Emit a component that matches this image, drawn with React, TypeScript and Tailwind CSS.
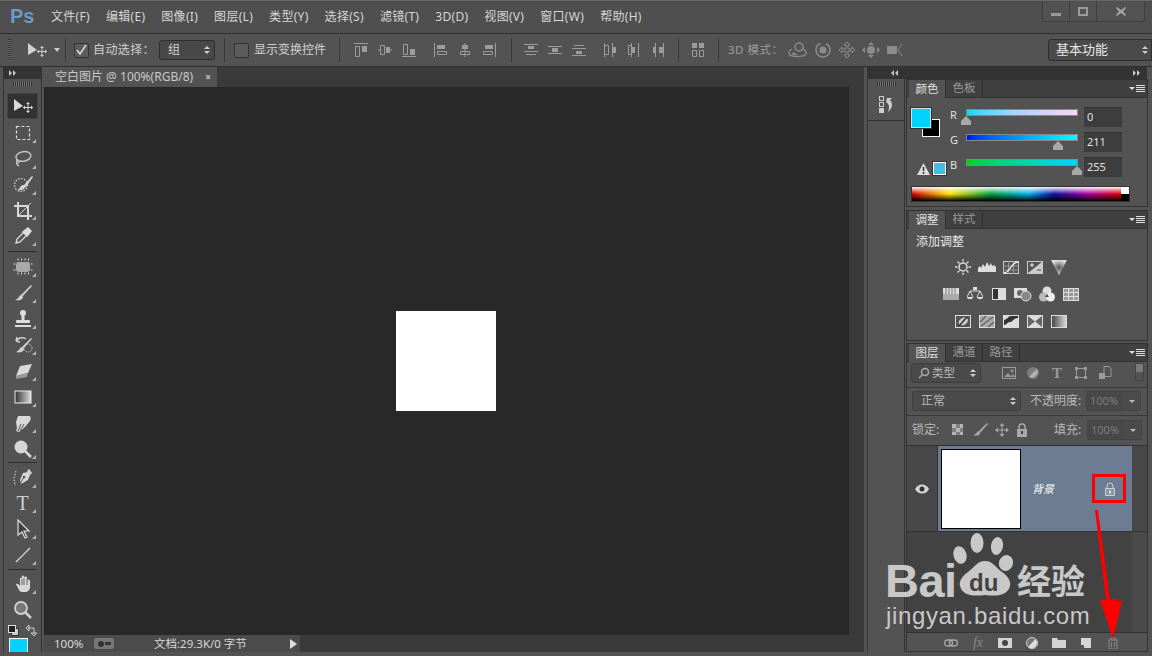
import React from "react";

const G = "#c4c4c4";
const font = "font-['Noto_Sans','Noto_Sans_CJK_SC',sans-serif]";

function S({ w = 20, h = 20, children }: { w?: number; h?: number; children: React.ReactNode }) {
  return (
    <svg width={w} height={h} viewBox={`0 0 ${w} ${h}`} className="block shrink-0">
      {children}
    </svg>
  );
}

const MoveGlyph = ({ c = G }: { c?: string }) => (
  <S w={22} h={16}>
    <path d="M2 1 L2 13 L11 8 Z" fill={c} />
    <path d="M16 5v9M11.5 9.5h9" stroke={c} strokeWidth="1" />
    <path d="M16 4l-2 2h4zM16 15l-2-2h4zM11 9.5l2-2v4zM21 9.5l-2-2v4z" fill={c} />
  </S>
);

const toolIcons: Record<string, React.ReactNode> = {
  move: <MoveGlyph c="#d8d8d8" />,
  marquee: <S><rect x="3.5" y="3.5" width="13" height="13" fill="none" stroke="#ddd" strokeWidth="1.2" strokeDasharray="3 2" /></S>,
  lasso: <S><ellipse cx="10.5" cy="7.5" rx="7.5" ry="4.8" fill="none" stroke={G} strokeWidth="1.5" transform="rotate(-10 10 8)" /><path d="M4 11c-1 3 0 5 2 6" fill="none" stroke={G} strokeWidth="1.4" /><circle cx="5" cy="13" r="1.3" fill="none" stroke={G} /></S>,
  quick: <S><circle cx="8" cy="10" r="6.5" fill="none" stroke="#ddd" strokeDasharray="1.5 1.5" strokeWidth="1.2" /><path d="M19 1l-8 9-1 0-1 3 4-1 7-10z" fill="#d4d4d4" /><path d="M10 10c-2 0-3 3-5 5 4 1 7-1 7-3z" fill="#d4d4d4" /></S>,
  crop: <S><path d="M5 1v14h14M1 5h14v14" fill="none" stroke="#d8d8d8" strokeWidth="2" /><path d="M4 16L18 2" stroke="#d8d8d8" strokeWidth="1" /></S>,
  dropper: <S><path d="M3 17l1-4 7-7 3 3-7 7z" fill="none" stroke="#ddd" strokeWidth="1.3" /><path d="M10 5l5-4 4 4-4 5-1 1-5-5z" fill="#ddd" /></S>,
  heal: <S><path d="M5 1.5v17M8.5 1.5v17M12 1.5v17M15.5 1.5v17M.5 7h19M.5 13h19" stroke="#ddd" strokeDasharray="2 1.5" strokeWidth="1" /><rect x="3" y="5" width="14" height="10" rx="3" fill="#a8a8a8" /></S>,
  brush: <S><path d="M18 2L8 12l1 2L19 3z" fill="#d0d0d0" /><path d="M8 12c-2 0-2 4-6 5 3 1 8 0 8-3z" fill="#d0d0d0" /></S>,
  stamp: <S><circle cx="10" cy="4" r="3" fill="#ddd" /><rect x="8.5" y="6" width="3" height="5" fill="#ddd" /><rect x="3" y="11" width="14" height="3" rx="1" fill="#ddd" /><rect x="2" y="16" width="16" height="2" fill="#ddd" /></S>,
  history: <S><path d="M18 3L9 12l1 2 9-10z" fill="#d0d0d0" /><path d="M9 12c-2 0-3 4-6 5 3 1 8 0 8-3z" fill="#d0d0d0" /><path d="M3 6c3-4 8-4 10-2M3 6l1-4M3 6l4 1" fill="none" stroke="#d0d0d0" strokeWidth="1.5" /><circle cx="15" cy="13" r="4" fill="none" stroke="#ddd" strokeDasharray="1.2 1.2" /></S>,
  eraser: <S><path d="M7 5L19 3l-4 9-12 3z" fill="#d8d8d8" /><path d="M3 15l0 3 11-2 1-4z" fill="#999" /></S>,
  gradient: <svg width="18" height="14" viewBox="0 0 18 14" className="block"><defs><linearGradient id="tg"><stop offset="0" stopColor="#333" /><stop offset="1" stopColor="#ddd" /></linearGradient></defs><rect x="1" y="1" width="16" height="12" fill="url(#tg)" stroke="#eee" /></svg>,
  dodge: <S><path d="M5 3h11c2 0 2 3 1 5l-5 6-6 5-3-1 1-3-1-6z" fill="#d8d8d8" /><path d="M8 11l-3 7M11 11l-4 7" stroke="#555" /></S>,
  sponge: <S><circle cx="8" cy="8" r="6.5" fill="#d6d6d6" /><path d="M12 12l6 6" stroke="#d6d6d6" strokeWidth="2.5" /></S>,
  pen: <S><path d="M7 12l3-7 5-1 2 3-2 5-7 4z" fill="#d8d8d8" /><path d="M14 3l2-2 3 4-2 2z" fill="#d8d8d8" /><circle cx="11" cy="9" r="1.3" fill="#555" /><path d="M7 16l4-7" stroke="#555" /><path d="M3 3L1 10l1 8" fill="none" stroke="#ccc" strokeDasharray="1.5 1.5" strokeWidth="1.2" /></S>,
  path: <S><path d="M5 1v15l4-3 3 6 2-1-3-6h5z" fill="#404040" stroke="#ddd" strokeWidth="1.2" /></S>,
  line: <S><path d="M3 17L17 3" stroke="#d0d0d0" strokeWidth="1.5" /></S>,
  hand: <S><path d="M3 10c2-1 3 1 4 2V5c0-2 2-2 2 0V3c0-2 2-2 2 0v1c0-2 3-2 3 0v3c0-2 3-2 3 0v6c0 3-2 5-5 5H9c-2 0-3-2-4-4z" fill="#d8d8d8" /><path d="M9 5v6M11 4v7M14 5v6" stroke="#666" /></S>,
  zoom: <S><circle cx="8" cy="8" r="6" fill="#777" stroke="#d0d0d0" strokeWidth="1.8" /><path d="M12 12l6 6" stroke="#d0d0d0" strokeWidth="2.5" /></S>,
};

function Tool({ k, corner = true, active = false }: { k?: string; corner?: boolean; active?: boolean }) {
  return (
    <div className={`relative h-[26px] w-[31px] mx-auto flex items-center justify-center ${active ? "bg-[#323232] rounded-[2px] border border-[#444]" : ""}`}>
      {k ? toolIcons[k] : <span className="font-['Liberation_Serif',serif] text-[20px] text-[#d0d0d0] leading-none">T</span>}
      {corner && <span className="absolute right-[2px] bottom-[3px] w-0 h-0 border-l-[4px] border-l-transparent border-b-[4px] border-b-[#b4b4b4]" />}
    </div>
  );
}

const ToolSep = () => <div className="h-[1px] bg-[#2f2f2f] mx-[4px] my-[0.5px]" />;

function Grip({ w = 19 }: { w?: number }) {
  return (
    <div className="h-[10px] flex items-center justify-center">
      <div className="h-[4px] bg-[repeating-linear-gradient(90deg,#2e2e2e_0,#2e2e2e_1px,#777_1px,#777_2px)]" style={{ width: w }} />
    </div>
  );
}

function LeftBar() {
  return (
    <div className="w-[44px] shrink-0 flex">
      <div className="w-[4px] bg-[#535353] border-r border-[#333]" />
      <div className="w-[38px] flex flex-col border-r border-[#333] bg-[#535353]">
        <div className="h-[12px] bg-[#333] flex items-center pl-[5px] text-[#bbb]">
          <svg width="8" height="6" viewBox="0 0 8 6" className="block"><path d="M0 0l3 3-3 3zM4 0l3 3-3 3z" fill="#c8c8c8" /></svg>
        </div>
        <Grip />
        <div className="h-[4px]" />
        <Tool k="move" corner={false} active />
        <div className="h-[1px]" />
        <Tool k="marquee" /><Tool k="lasso" /><Tool k="quick" /><Tool k="crop" /><Tool k="dropper" />
        <div className="h-[1px]" /><ToolSep /><div className="h-[2px]" />
        <Tool k="heal" /><Tool k="brush" /><Tool k="stamp" /><Tool k="history" /><Tool k="eraser" /><Tool k="gradient" /><Tool k="dodge" /><Tool k="sponge" />
        <ToolSep /><div className="h-[1px]" />
        <Tool k="pen" /><Tool /><Tool k="path" /><Tool k="line" />
        <ToolSep /><div className="h-[1px]" />
        <Tool k="hand" /><Tool k="zoom" corner={false} />
        <div className="flex items-center justify-between px-[4px] h-[15px]">
          <svg width="11" height="11" viewBox="0 0 11 11" className="block"><rect x="3.5" y="3.5" width="7" height="7" fill="#ccc" stroke="#333" /><rect x=".5" y=".5" width="7" height="7" fill="#222" stroke="#ddd" /></svg>
          <svg width="11" height="11" viewBox="0 0 11 11" className="block"><path d="M2 3h6v6M0 3l3-3v6zM8 11L5 8h6z" fill="none" stroke="#ccc" /></svg>
        </div>
        <div className="w-[19px] h-[14px] ml-[5px] bg-[#00d3ff] border border-white border-b-0" />
      </div>
    </div>
  );
}

const menus = ["文件(F)", "编辑(E)", "图像(I)", "图层(L)", "类型(Y)", "选择(S)", "滤镜(T)", "3D(D)", "视图(V)", "窗口(W)", "帮助(H)"];

function TitleBar() {
  return (
    <div className="h-[33px] shrink-0 flex bg-[#4f4f4f] border-t border-[#666] relative">
      <div className="w-[51px] pl-[10px] pt-[1px] text-[20px] leading-[28px] font-bold text-[#6b9ac9] font-['Liberation_Sans',sans-serif]">Ps</div>
      <div className="flex gap-[16px] items-center h-[32px] text-[12px] tracking-[0.3px] text-[#d6d6d6]">
        {menus.map((m) => <span key={m}>{m}</span>)}
      </div>
      <div className="absolute left-[1042px] top-0 w-[103px] h-[21px] flex rounded-b-[3px] border border-t-0 border-[#3f3f3f] bg-[#525252]">
        <div className="w-[27px] flex items-center justify-center border-r border-[#3f3f3f]"><div className="w-[10px] h-[3px] mt-[6px] bg-[#9a9a9a]" /></div>
        <div className="w-[27px] flex items-center justify-center border-r border-[#3f3f3f]"><div className="w-[10px] h-[9px] border-2 border-[#9a9a9a]" /></div>
        <div className="flex-1 flex items-center justify-center"><svg width="10" height="9" viewBox="0 0 10 9" className="block"><path d="M1 0l4 3 4-3 1 1-3 3.5 3 3.5-1 1-4-3-4 3-1-1 3-3.5-3-3.5z" fill="#a4a4a4" /></svg></div>
      </div>
    </div>
  );
}

function A({ d, filled }: { d: string; filled: string }) {
  return (
    <svg width="16" height="16" viewBox="0 0 16 16" className="block shrink-0">
      <path d={d} fill="none" stroke="#9c9c9c" />
      <path d={filled} fill="#9c9c9c" />
    </svg>
  );
}

const VSep = ({ mx }: { mx: string }) => <div className={`w-[1px] h-[24px] shrink-0 bg-[#383838] ${mx}`} />;

const alignA: [string, string][] = [
  ["M1 1.5h14M2.5 4.5h4v10h-4z", "M9 4h5v6H9z"],
  ["M1 8h2M13 8h2M3.5 3.5h4v9h-4z", "M9 5h4v6H9z"],
  ["M1 14.5h14M2.5 2.5h4v10h-4z", "M9 7h5v6H9z"],
];
const alignB: [string, string][] = [
  ["M1.5 1v14M4.5 9.5h9v3h-9z", "M4 3h8v4H4z"],
  ["M8 1v14M3.5 9.5h9v3h-9z", "M5 3h6v4H5z"],
  ["M14.5 1v14M2.5 9.5h9v3h-9z", "M4 3h8v4H4z"],
];
const distA: [string, string][] = [
  ["M1 2.5h14M1 9.5h14M3 12.5h10", "M5 4h6v3H5z"],
  ["M1 4.5h14M1 11.5h14", "M5 6h6v4H5z"],
  ["M1 13.5h14M1 6.5h14M3 3.5h10", "M5 9h6v3H5z"],
];
const distB: [string, string][] = [
  ["M2.5 1v14M10.5 1v14M2.5 3.5h4v9h-4z", "M11 5h3v6h-3z"],
  ["M5.5 1v14M12.5 1v14M2.5 3.5h3v9h-3z", "M6 5h3v6H6z"],
  ["M5.5 1v14M13.5 1v14", "M9 5h4v6H9zM3 5h2v6H3z"],
];

function Updown() {
  return (
    <span className="flex flex-col gap-[2px]">
      <span className="w-0 h-0 border-x-[3px] border-x-transparent border-b-[3px] border-b-[#ccc]" />
      <span className="w-0 h-0 border-x-[3px] border-x-transparent border-t-[3px] border-t-[#ccc]" />
    </span>
  );
}

function OptionsBar() {
  return (
    <div className="h-[34px] shrink-0 flex items-center bg-[#535353] border-y border-[#2f2f2f] pl-[8px] relative text-[12px] text-[#d0d0d0]">
      <div className="w-[3px] h-[22px] bg-[repeating-linear-gradient(180deg,#333_0,#333_1px,#6a6a6a_1px,#6a6a6a_2px)]" />
      <div className="ml-[15px]"><MoveGlyph c="#d0d0d0" /></div>
      <div className="ml-[6px] w-0 h-0 border-x-[3px] border-x-transparent border-t-[4px] border-t-[#ccc]" />
      <VSep mx="ml-[5px]" />
      <div className="ml-[8px] w-[15px] h-[15px] rounded-[2px] bg-[#5c5c5c] border border-[#333] flex items-center justify-center">
        <svg width="13" height="13" viewBox="0 0 13 13" className="block"><path d="M2 6l3 4 6-9" fill="none" stroke="#ddd" strokeWidth="1.5" /></svg>
      </div>
      <span className="ml-[4px] w-[66px] tracking-[0.4px] whitespace-nowrap">自动选择：</span>
      <div className="w-[56px] h-[20px] rounded-[3px] bg-[#484848] border border-[#2e2e2e] flex items-center pl-[8px] pr-[4px] justify-between">
        <span>组</span><Updown />
      </div>
      <VSep mx="mx-[9px]" />
      <div className="w-[15px] h-[15px] rounded-[2px] bg-[#5c5c5c] border border-[#333]" />
      <span className="ml-[5px] w-[72px] whitespace-nowrap">显示变换控件</span>
      <VSep mx="ml-[13px] mr-[13px]" />
      <div className="flex gap-[8px]">{alignA.map((a, i) => <A key={i} d={a[0]} filled={a[1]} />)}</div>
      <div className="flex gap-[8px] ml-[16px]">{alignB.map((a, i) => <A key={i} d={a[0]} filled={a[1]} />)}</div>
      <VSep mx="ml-[14px] mr-[11px]" />
      <div className="flex gap-[8px]">{distA.map((a, i) => <A key={i} d={a[0]} filled={a[1]} />)}</div>
      <div className="flex gap-[8px] ml-[15px]">{distB.map((a, i) => <A key={i} d={a[0]} filled={a[1]} />)}</div>
      <VSep mx="ml-[12px] mr-[11px]" />
      <A d="M2.5 8.5h4v6h-4zM9.5 8.5h4v6h-4z" filled="M2 1h5v5H2zM9 1h5v5H9z" />
      <VSep mx="ml-[12px]" />
      <span className="ml-[9px] text-[#9c9c9c] text-[11.5px] tracking-[0.5px] w-[60px] whitespace-nowrap">3D 模式：</span>
      <div className="flex gap-[6px] items-center">
        <S w={20} h={16}><circle cx="11" cy="5" r="4" fill="none" stroke="#8c8c8c" strokeWidth="1.5" /><path d="M4 7c-3 1-4 4-2 6s12 2 15 0 0-6-3-6" fill="none" stroke="#8c8c8c" strokeWidth="1.3" /><path d="M5 10l5 3H4z" fill="#8c8c8c" /></S>
        <S w={18} h={16}><circle cx="9" cy="8" r="7" fill="none" stroke="#8c8c8c" strokeWidth="1.5" strokeDasharray="30 6" /><circle cx="9" cy="8" r="3.5" fill="#8c8c8c" /></S>
        <S w={18} h={16}><path d="M9 0l3 3h-2v4h4V5l3 3-3 3V9h-4v4h2l-3 3-3-3h2V9H4v2L1 8l3-3v2h4V3H6z" fill="none" stroke="#8c8c8c" /></S>
        <S w={18} h={16}><path d="M9 0l3 3H6zM9 16l3-3H6zM0 8l3-3v6zM18 8l-3-3v6z" fill="#8c8c8c" /><circle cx="9" cy="8" r="4" fill="#8c8c8c" /></S>
        <S w={18} h={16}><rect x="1" y="4" width="10" height="8" rx="1" fill="#8c8c8c" /><path d="M16 2l-4 6 4 6" fill="none" stroke="#8c8c8c" /></S>
      </div>
      <div className="absolute left-[1048px] top-[5px] w-[104px] h-[22px] rounded-l-[3px] bg-[#4a4a4a] border border-[#2e2e2e] flex items-center pl-[7px] text-[13px] text-[#e8e8e8]">
        <span className="w-[52px] whitespace-nowrap">基本功能</span>
        <span className="ml-[34px]"><Updown /></span>
      </div>
    </div>
  );
}

function DocArea() {
  return (
    <div className="flex-1 min-w-0 flex flex-col">
      <div className="h-[20px] shrink-0 bg-[#3a3a3a] flex">
        <div className="w-[173px] bg-[#535353] flex items-center pl-[11px] pr-[6px] justify-between text-[12px] text-[#c8c8c8] whitespace-nowrap">
          <span>空白图片 @ 100%(RGB/8)</span>
          <span className="text-[10px] leading-none font-bold">×</span>
        </div>
      </div>
      <div className="flex-1 min-h-0 flex">
        <div className="flex-1 bg-[#282828] flex items-center justify-center pr-[1px]">
          <div className="w-[100px] h-[100px] bg-white" />
        </div>
        <div className="w-[15px] bg-[#3a3a3a]" />
      </div>
      <div className="h-[17px] shrink-0 flex bg-[#3a3a3a]">
        <div className="w-[256px] flex items-center bg-[#4b4b4b] text-[11.5px] text-[#d8d8d8]">
          <span className="ml-[10px] w-[40px]">100%</span>
          <div className="w-[20px] h-[11px] rounded-[2px] bg-[#777] flex items-center justify-center gap-[1px]">
            <span className="w-[6px] h-[6px] rounded-full bg-[#333]" /><span className="w-[6px] h-[3px] bg-[#333]" />
          </div>
          <span className="ml-[40px] whitespace-nowrap w-[136px]">文档:29.3K/0 字节</span>
          <span className="w-0 h-0 border-y-[5px] border-y-transparent border-l-[7px] border-l-[#ddd]" />
        </div>
      </div>
    </div>
  );
}

function PanelMenu() {
  return (
    <div className="ml-auto mr-[2px] flex items-center gap-[1px]">
      <span className="w-0 h-0 border-x-[3px] border-x-transparent border-t-[3px] border-t-[#ddd]" />
      <span className="w-[9px] h-[7px] bg-[repeating-linear-gradient(180deg,#ddd_0,#ddd_1px,transparent_1px,transparent_2px)]" />
    </div>
  );
}

function Tabs({ items }: { items: string[] }) {
  return (
    <div className="h-[18px] shrink-0 flex items-stretch bg-[#404040] border-b border-[#333] pl-[2px] text-[11.5px]">
      {items.map((t, i) => (
        <div key={t} className={`w-[37px] pb-[1px] flex items-center justify-center border-r border-[#2f2f2f] ${i === 0 ? "bg-[#535353] text-[#e0e0e0] -mb-[1px]" : "text-[#999]"}`}>{t}</div>
      ))}
      <PanelMenu />
    </div>
  );
}

function Slider({ cls, pos }: { cls: string; pos: number }) {
  return (
    <div className="relative w-[112px] h-[7px]">
      <div className={`h-[7px] border border-[#888] ${cls}`} />
      <svg width="12" height="9" viewBox="0 0 12 9" className="absolute top-[7px] block" style={{ left: pos - 6 }}>
        <path d="M6 0l5 5v4H1V5z" fill="#a8a8a8" />
      </svg>
    </div>
  );
}

function NumBox({ v }: { v: string }) {
  return <div className="w-[38px] h-[20px] bg-[#3d3d3d] border-t border-[#333] flex items-center pl-[3px] text-[11px] text-[#e0e0e0]">{v}</div>;
}

function ColorPanel() {
  const rows = [
    { l: "R", v: "0", cls: "bg-linear-to-r from-[#00d3ff] to-[#ffd3ff]", pos: 0 },
    { l: "G", v: "211", cls: "bg-linear-to-r from-[#0000ff] to-[#00ffff]", pos: 92 },
    { l: "B", v: "255", cls: "bg-linear-to-r from-[#00d300] to-[#00d3ff]", pos: 111 },
  ];
  return (
    <div className="h-[128px] shrink-0 flex flex-col border border-[#333] bg-[#535353]">
      <Tabs items={["颜色", "色板"]} />
      <div className="flex pt-[9px] pl-[4px]">
        <div className="w-[39px] flex flex-col">
          <div className="relative w-[30px] h-[30px] mt-[1px]">
            <div className="absolute left-[11px] top-[11px] w-[18px] h-[18px] bg-black border border-white" />
            <div className="absolute left-0 top-0 w-[20px] h-[20px] bg-[#00d3ff] border border-[#ddd] outline outline-[#333]" />
          </div>
          <div className="flex items-center gap-[3px] mt-[24px] pl-[6px]">
            <svg width="13" height="12" viewBox="0 0 13 12" className="block"><path d="M6.5 0L13 12H0z" fill="#ddd" /><path d="M6.5 4v4M6.5 9v2" stroke="#333" strokeWidth="1.5" /></svg>
            <div className="w-[13px] h-[13px] bg-[#45bce6] border border-white outline outline-[#333]" />
          </div>
        </div>
        <div className="flex flex-col gap-[4px]">
          {rows.map((r) => (
            <div key={r.l} className="flex h-[21px]">
              <span className="w-[16px] pt-[1px] text-[11px] text-[#e0e0e0] leading-[14px]">{r.l}</span>
              <div className="pt-[2px]"><Slider cls={r.cls} pos={r.pos} /></div>
              <div className="ml-[6px]"><NumBox v={r.v} /></div>
            </div>
          ))}
        </div>
      </div>
      <div className="mt-[8px] ml-[4px] w-[219px] h-[16px] flex border border-[#333]">
        <div className="flex-1 bg-[linear-gradient(180deg,rgba(255,255,255,0.95),rgba(255,255,255,0)_50%,rgba(0,0,0,0)_50%,rgba(0,0,0,1)),linear-gradient(90deg,#d00000,#ffe600_18%,#00a040_38%,#00b0f0_56%,#1010a0_68%,#b000a0_85%,#e00000)]" />
        <div className="w-[8px] flex flex-col"><div className="flex-1 bg-white" /><div className="flex-1 bg-black" /></div>
      </div>
    </div>
  );
}

const adj: React.ReactNode[] = [
  <S w={16} h={16} key="0"><circle cx="8" cy="8" r="4" fill="none" stroke="#ddd" strokeWidth="1.5" /><path d="M8 0v2.5M8 13.5V16M0 8h2.5M13.5 8H16M2.5 2.5l2 2M11.5 11.5l2 2M2.5 13.5l2-2M11.5 4.5l2-2" stroke="#ddd" strokeWidth="1.3" /></S>,
  <S w={18} h={16} key="1"><path d="M0 13V9l2-2 1 2 2-4 2 3 2-5 2 4 2-3 1 3 2-1 2 2v5z" fill="#ddd" /></S>,
  <S w={16} h={16} key="2"><rect x=".5" y="2.5" width="15" height="12" fill="#555" stroke="#ccc" /><path d="M5.5 2v13M10.5 2v13M0 7h16M0 11h16" stroke="#999" /><path d="M1 14C7 14 8 3 15 3" fill="none" stroke="#eee" strokeWidth="1.3" /></S>,
  <S w={16} h={16} key="3"><rect x=".5" y="2.5" width="15" height="12" fill="#555" stroke="#ccc" /><path d="M1 14L15 3v11z" fill="#ccc" /><path d="M3 6h4M5 4v4" stroke="#eee" /><path d="M10 11h4" stroke="#444" /></S>,
  <svg width="16" height="16" viewBox="0 0 16 16" className="block" key="4"><defs><radialGradient id="vb"><stop offset="0" stopColor="#555" /><stop offset="1" stopColor="#ddd" /></radialGradient></defs><path d="M0 1h16L8 16z" fill="url(#vb)" /></svg>,
  <S w={16} h={16} key="5"><rect x="0" y="2" width="16" height="6" fill="#ddd" /><path d="M3 2v6M6 2v6M9 2v6M12 2v6" stroke="#777" /><rect x="0" y="8" width="16" height="6" fill="#aaa" /></S>,
  <S w={16} h={16} key="6"><path d="M8 1v3M3 5h10M3 5l-3 6M3 5l3 6M13 5l-3 6M13 5l3 6" stroke="#ddd" fill="none" /><path d="M0 11h6c0 3-6 3-6 0zM10 11h6c0 3-6 3-6 0z" fill="#ddd" /><rect x="6" y="1" width="4" height="3" fill="#ddd" /></S>,
  <S w={16} h={16} key="7"><rect x="1" y="2" width="14" height="12" fill="#ddd" /><rect x="1.5" y="2.5" width="6" height="11" fill="#333" stroke="#ddd" /></S>,
  <S w={18} h={16} key="8"><rect x="0" y="2" width="13" height="10" fill="#ddd" /><circle cx="6" cy="7" r="3" fill="#666" /><circle cx="12" cy="10" r="5" fill="#888" stroke="#ddd" /></S>,
  <S w={16} h={16} key="9"><circle cx="8" cy="5" r="4.5" fill="#ddd" /><circle cx="4.5" cy="11" r="4.5" fill="#bbb" /><circle cx="11.5" cy="11" r="4.5" fill="#eee" /><path d="M8 8l-2 3h4z" fill="#444" /></S>,
  <S w={16} h={16} key="10"><rect x=".5" y="2.5" width="15" height="12" fill="#999" stroke="#ddd" /><path d="M5.5 2v13M10.5 2v13M0 6.5h16M0 10.5h16" stroke="#ddd" /></S>,
  <S w={16} h={16} key="11"><rect x=".5" y="2.5" width="15" height="12" fill="#555" stroke="#ddd" /><ellipse cx="8" cy="8.5" rx="5" ry="3.5" fill="#ccc" transform="rotate(-30 8 8)" /><path d="M4 13L12 4" stroke="#333" strokeWidth="1.5" /></S>,
  <S w={16} h={16} key="12"><rect x=".5" y="2.5" width="15" height="12" fill="#aaa" stroke="#ddd" /><path d="M2 13L14 4M1 9l6-6M9 14l6-5" stroke="#666" strokeWidth="1.5" /></S>,
  <S w={16} h={16} key="13"><rect x=".5" y="2.5" width="15" height="12" fill="#ddd" stroke="#ddd" /><path d="M1 12c3 0 3-3 6-3s3-4 8-4v-2H8C5 3 5 6 1 7z" fill="#333" /></S>,
  <S w={16} h={16} key="14"><rect x=".5" y="2.5" width="15" height="12" fill="#ddd" stroke="#ddd" /><path d="M1 3l7 5.5L1 14zM15 3L8 8.5 15 14z" fill="#666" /></S>,
  <svg width="16" height="16" viewBox="0 0 16 16" className="block" key="15"><defs><linearGradient id="ag"><stop offset="0" stopColor="#444" /><stop offset="1" stopColor="#ddd" /></linearGradient></defs><rect x=".5" y="2.5" width="15" height="12" fill="url(#ag)" stroke="#ddd" /></svg>,
];

function AdjustPanel() {
  const row = (a: number, b: number) => (
    <div className="h-[27px] flex items-center justify-center gap-[8px] w-[152px] ml-[28px]">
      {adj.slice(a, b).map((n, i) => <div key={i} className="w-[16px] flex justify-center">{n}</div>)}
    </div>
  );
  return (
    <div className="h-[131px] shrink-0 flex flex-col border border-[#333] bg-[#535353] mt-[3px]">
      <Tabs items={["调整", "样式"]} />
      <div className="h-[19px] mt-[3px] pl-[9px] text-[12px] text-[#e8e8e8] flex items-center">添加调整</div>
      <div className="mt-[2px]">
        {row(0, 5)}
        {row(5, 11)}
        {row(11, 16)}
      </div>
    </div>
  );
}

function DisabledField() {
  return (
    <div className="flex w-[55px] h-[20px] rounded-[2px] bg-[#4b4b4b] border border-[#444]">
      <div className="w-[36px] bg-[#484848] text-[11px] text-[#7c7c7c] flex items-center pl-[3px]">100%</div>
      <div className="flex-1 flex items-center justify-center"><span className="w-0 h-0 border-x-[3px] border-x-transparent border-t-[3px] border-t-[#bbb]" /></div>
    </div>
  );
}

function LayersPanel() {
  return (
    <div className="flex-1 min-h-0 flex flex-col border border-[#333] bg-[#535353] mt-[2px] text-[11.5px] text-[#b8b8b8]">
      <Tabs items={["图层", "通道", "路径"]} />
      <div className="h-[26px] shrink-0 flex items-start pt-[1px] pl-[4px] border-b border-[#3a3a3a]">
        <div className="w-[70px] h-[20px] rounded-[3px] bg-[#4a4a4a] border border-[#3e3e3e] flex items-center pl-[6px] pr-[4px] justify-between">
          <span className="flex items-center gap-[2px]">
            <svg width="12" height="12" viewBox="0 0 12 12" className="block"><circle cx="7" cy="5" r="3.5" fill="none" stroke="#aaa" strokeWidth="1.5" /><path d="M4 8l-3 3" stroke="#aaa" strokeWidth="1.5" /></svg>
            类型
          </span>
          <Updown />
        </div>
        <div className="ml-[21px] h-[20px] flex gap-[10px] items-center">
          <S w={14} h={14}><rect x=".5" y="1.5" width="13" height="11" fill="none" stroke="#9a9a9a" /><path d="M2 11l4-4 3 3 2-2 2 3z" fill="#9a9a9a" /><path d="M10 3v4M8 5h4" stroke="#9a9a9a" /></S>
          <S w={14} h={14}><circle cx="7" cy="7" r="6" fill="#7e7e7e" /><path d="M11 3A6 6 0 013 11z" fill="#b4b4b4" /></S>
          <span className="w-[14px] font-['Liberation_Serif',serif] text-[15px] font-bold leading-none text-[#9a9a9a] text-center">T</span>
          <S w={14} h={14}><rect x="2.5" y="2.5" width="9" height="9" fill="none" stroke="#9a9a9a" /><path d="M1 1h3v3H1zM10 1h3v3h-3zM1 10h3v3H1zM10 10h3v3h-3z" fill="#9a9a9a" /></S>
          <S w={14} h={14}><path d="M6 .5h5l2 2v8H6z" fill="none" stroke="#9a9a9a" /><path d="M1 7h6v6H1z" fill="#9a9a9a" /></S>
        </div>
        <div className="ml-auto mr-[3px] w-[9px] h-[18px] flex flex-col border border-[#444]"><div className="h-[8px] bg-[#7a7a7a]" /></div>
      </div>
      <div className="h-[28px] shrink-0 flex items-center pb-[1px] pl-[5px] border-b border-[#3a3a3a] text-[12px]">
        <div className="w-[109px] h-[20px] rounded-[3px] bg-[#4a4a4a] border border-[#3e3e3e] flex items-center pl-[8px] pr-[4px] justify-between text-[#b8b8b8]">
          <span>正常</span><Updown />
        </div>
        <span className="ml-[9px] w-[56px] whitespace-nowrap">不透明度:</span>
        <DisabledField />
      </div>
      <div className="h-[29px] shrink-0 flex items-center pb-[1px] pl-[5px] text-[12px]">
        <span className="w-[39px]">锁定:</span>
        <div className="flex gap-[7px] items-center">
          <S w={14} h={14}><rect x="1" y="1" width="11" height="11" fill="#808080" /><path d="M1 1h4v4H1zM9 1h3v4H9zM5 5h4v4H5zM1 9h4v3H1zM9 9h3v3H9z" fill="#b4b4b4" /></S>
          <S w={16} h={14}><path d="M15 0L7 8l1 2 8-9z" fill="#a8a8a8" /><path d="M7 8c-2 0-2 3-6 4 3 1 7 1 7-2z" fill="#a8a8a8" /></S>
          <S w={14} h={14}><path d="M7 1v12M1 7h12" stroke="#a8a8a8" /><path d="M7 0l-2.5 3h5zM7 14l-2.5-3h5zM0 7l3-2.5v5zM14 7l-3-2.5v5z" fill="#a8a8a8" /></S>
          <S w={12} h={14}><path d="M3 6V4a3 3 0 016 0v2" fill="none" stroke="#a8a8a8" strokeWidth="1.5" /><path d="M1 6h10v8H1z" fill="#a8a8a8" /><rect x="5" y="8" width="2" height="3" fill="#444" /></S>
        </div>
        <span className="ml-[26px] w-[33px] whitespace-nowrap">填充:</span>
        <DisabledField />
      </div>
      <div className="h-[87px] shrink-0 flex bg-[#484848] border-y border-[#333]">
        <div className="w-[31px] flex items-center justify-center border-r border-[#333]">
          <svg width="14" height="10" viewBox="0 0 14 10" className="block"><path d="M0 5c3-6 11-6 14 0-3 6-11 6-14 0z" fill="#d4d4d4" /><circle cx="7" cy="5" r="2.5" fill="#333" /></svg>
        </div>
        <div className="w-[194px] bg-[#6b7c93] flex items-center pl-[3px]">
          <div className="w-[80px] h-[80px] bg-white border-[1.5px] border-black shrink-0" />
          <span className="ml-[11px] mt-[2px] italic text-[11px] text-white w-[60px]">背景</span>
          <svg width="12" height="14" viewBox="0 0 12 14" className="block ml-[12px]"><path d="M3 6V4a3 3 0 016 0v2" fill="none" stroke="#cfcfcf" strokeWidth="1" /><path d="M1.5 6.500h9v7h-9z" fill="#8796a8" stroke="#cfcfcf" /><rect x="5" y="8.5" width="2" height="3" fill="#dcdcdc" /></svg>
        </div>
      </div>
      <div className="flex-1 min-h-0 flex bg-[#4a4a4a]">
        <div className="w-[225px] bg-[#424242]" />
      </div>
      <div className="h-[19px] shrink-0 flex items-center bg-[#535353] border-t border-[#333] pl-[37px] pt-[1px] gap-[13px] text-[#aaa]">
        <S w={14} h={12}><rect x=".5" y="3" width="8" height="6" rx="3" fill="none" stroke="#a8a8a8" strokeWidth="1.3" /><rect x="5.5" y="3" width="8" height="6" rx="3" fill="none" stroke="#a8a8a8" strokeWidth="1.3" /></S>
        <span className="w-[14px] text-center italic font-['Liberation_Serif',serif] text-[14px] leading-none text-[#888]">fx</span>
        <S w={14} h={12}><rect x="0" y="1" width="14" height="10" fill="#d4d4d4" /><circle cx="7" cy="6" r="3" fill="#444" /></S>
        <S w={14} h={12}><circle cx="7" cy="6" r="5.5" fill="#777" stroke="#ccc" /><path d="M10.5 2A5.5 5.5 0 013 10z" fill="#ddd" /></S>
        <S w={14} h={12}><path d="M0 1h5l1 2h8v8H0z" fill="#d4d4d4" /></S>
        <S w={14} h={12}><path d="M2 1h10v10H5V8H2z" fill="#d4d4d4" /><path d="M2 8h3v3" fill="#555" /></S>
        <S w={14} h={12}><path d="M2 3h10M5 3V1h4v2M3 3v9h8V3" fill="none" stroke="#8a8a8a" /><path d="M5.5 5v5M8.5 5v5" stroke="#8a8a8a" /></S>
      </div>
    </div>
  );
}

function RightSide() {
  return (
    <div className="w-[285px] ml-[3px] shrink-0 flex flex-col">
      <div className="h-[12px] shrink-0 bg-[#333] flex items-center justify-between pl-[24px] pr-[6px] mr-[5px]">
        <svg width="8" height="6" viewBox="0 0 8 6" className="block"><path d="M3 0L0 3l3 3zM7 0L4 3l3 3z" fill="#c8c8c8" /></svg>
        <svg width="8" height="6" viewBox="0 0 8 6" className="block"><path d="M0 0l3 3-3 3zM4 0l3 3-3 3z" fill="#c8c8c8" /></svg>
      </div>
      <div className="flex-1 min-h-0 flex">
        <div className="w-[38px] shrink-0 flex flex-col border-x border-[#333]">
          <Grip />
          <div className="h-[32px] border-b border-[#333] flex items-center justify-center gap-[2px]">
            <div className="flex flex-col gap-[1px]">
              <span className="w-[5px] h-[5px] border border-[#ccc]" />
              <span className="w-[5px] h-[5px] border border-[#ccc]" />
              <span className="w-[5px] h-[5px] bg-[#ccc]" />
            </div>
            <svg width="8" height="16" viewBox="0 0 8 16" className="block"><path d="M1 1h5L4 3c3 3 3 8-2 12 2-5 1-8-2-10z" fill="#ccc" /></svg>
          </div>
        </div>
        <div className="w-[242px] ml-[1px] shrink-0 flex flex-col">
          <ColorPanel />
          <AdjustPanel />
          <LayersPanel />
        </div>
      </div>
    </div>
  );
}

function Watermark() {
  return (
    <>
      <span className="absolute left-[885px] top-[551px] font-['Liberation_Sans',sans-serif] font-bold text-[47px] leading-[60px] tracking-[-0.5px] text-[#c8c8c8]">Bai</span>
      <svg width="70" height="70" viewBox="0 0 70 70" className="absolute left-[950px] top-[530px] block">
        <ellipse cx="10" cy="25" rx="6.5" ry="9" fill="#c8c8c8" transform="rotate(-15 10 25)" />
        <ellipse cx="27" cy="13" rx="6.5" ry="10" fill="#c8c8c8" />
        <ellipse cx="47" cy="16" rx="6" ry="9" fill="#c8c8c8" transform="rotate(10 47 16)" />
        <ellipse cx="56" cy="33" rx="7" ry="8" fill="#c8c8c8" transform="rotate(20 56 33)" />
        <path d="M35 31c8 0 10 6 17 11 7 5 9 10 8 14-2 8-10 11-25 9-15 2-23-1-25-9-1-4 1-9 8-14 7-5 9-11 17-11z" fill="#c8c8c8" />
      </svg>
      <span className="absolute left-[969px] top-[570px] font-['Liberation_Sans',sans-serif] font-bold text-[24px] leading-[26px] text-[#424242]">du</span>
      <span className="absolute left-[1017px] top-[558px] font-['Noto_Sans_CJK_SC',sans-serif] font-bold text-[34px] leading-[44px] text-[#c8c8c8] whitespace-nowrap">经验</span>
      <span className="absolute left-[886px] top-[601px] font-['Liberation_Sans',sans-serif] text-[24px] leading-[30px] tracking-[0.65px] text-[#c8c8c8] whitespace-nowrap">jingyan.baidu.com</span>
    </>
  );
}

export default function App() {
  return (
    <div className={`relative w-[1152px] h-[656px] overflow-hidden flex flex-col bg-[#535353] ${font}`}>
      <TitleBar />
      <OptionsBar />
      <div className="flex-1 min-h-0 flex pb-[4px]">
        <LeftBar />
        <DocArea />
        <RightSide />
      </div>
      <Watermark />
      <div className="absolute left-[1092px] top-[474px] w-[34px] h-[29px] border-[3px] border-[#ff0000]" />
      <svg width="40" height="130" viewBox="0 0 40 130" className="absolute left-[1090px] top-[508px] block">
        <path d="M5 2l3 0 12 90 6-2-2 2 8 1-9 38-13-39 6 0z" fill="#ff0000" />
      </svg>
    </div>
  );
}
